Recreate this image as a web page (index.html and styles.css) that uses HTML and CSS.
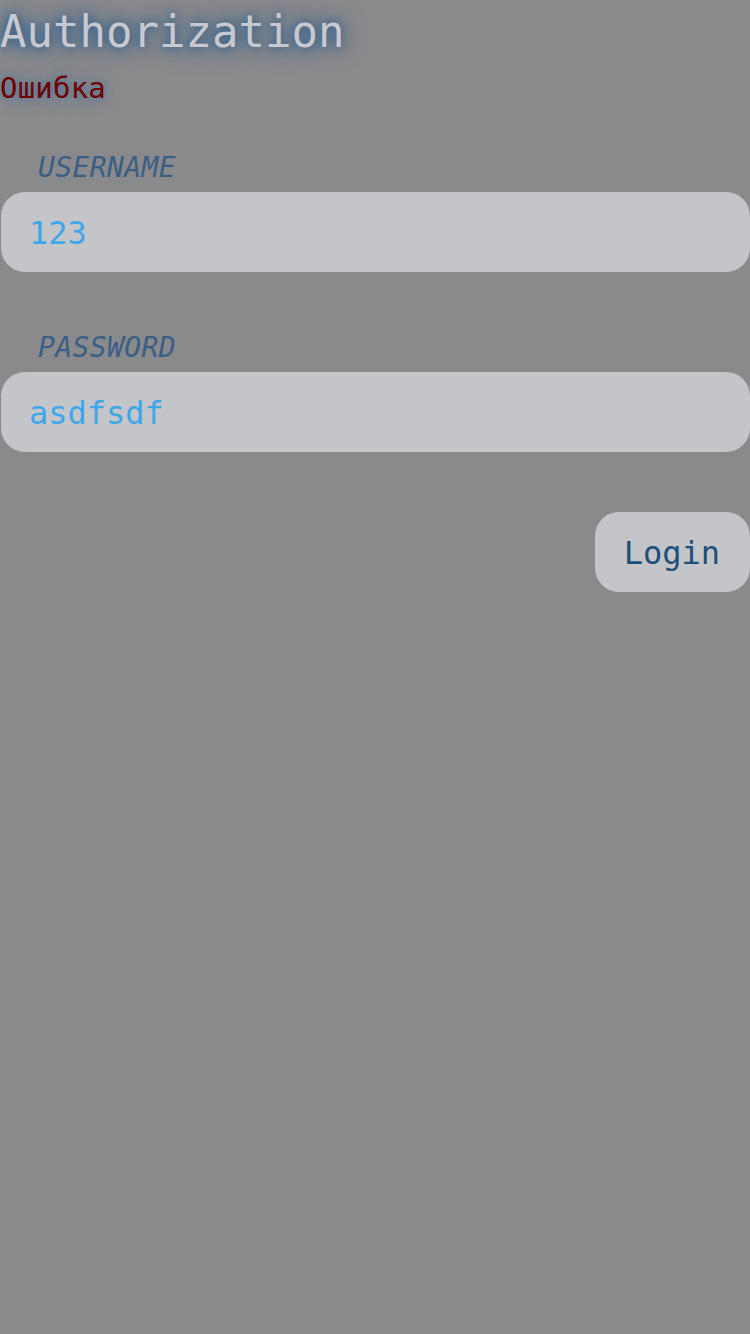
FILE: index.html
```html
<!DOCTYPE html>
<html lang="ru">
<head>
<meta charset="utf-8">
<title>Authorization</title>
<link rel="stylesheet" href="styles.css">
</head>
<body>
<div class="page">
  <h1 class="title">Authorization</h1>
  <div class="error">Ошибка</div>
  <form class="form">
    <label class="field">
      <span class="label">USERNAME</span>
      <input class="input" type="text" value="123">
    </label>
    <label class="field">
      <span class="label">PASSWORD</span>
      <input class="input" type="text" value="asdfsdf">
    </label>
    <div class="actions">
      <button class="button" type="button">Login</button>
    </div>
  </form>
</div>
</body>
</html>
```
FILE: styles.css
```css
html, body {
  margin: 0;
  padding: 0;
  background: #8a8a8c;
  min-height: 100%;
}
body {
  font-family: "DejaVu Sans Mono", "Liberation Mono", monospace;
}
.page {
  display: flex;
  flex-direction: column;
}
.title {
  margin: 0;
  padding-top: 6px;
  font-size: 44px;
  font-weight: normal;
  line-height: 51px;
  color: #c8c9d0;
  text-shadow: 0 0 8px #3a638c, 0 0 16px #3a638c, 0 0 24px #4a6d90;
}
.error {
  margin-top: 15px;
  font-size: 29px;
  line-height: 33px;
  letter-spacing: 0.2px;
  color: #6e0000;
  text-shadow: 0 0 8px #4f7396, 0 0 16px #5a7898;
}
.form {
  display: flex;
  flex-direction: column;
  margin-top: 46px;
  gap: 59px;
}
.field {
  display: flex;
  flex-direction: column;
  gap: 8px;
}
.label {
  padding-left: 38px;
  font-size: 28px;
  line-height: 33px;
  letter-spacing: 0.4px;
  font-style: italic;
  color: #3a5e85;
}
.input {
  box-sizing: border-box;
  margin: 0 0 0 1px;
  height: 80px;
  width: 749px;
  border: none;
  border-radius: 24px;
  background: #c4c5c9;
  padding: 1px 28px 0;
  font-family: inherit;
  font-size: 32px;
  color: #3ea6ea;
  outline: none;
}
.actions {
  display: flex;
  justify-content: flex-end;
  margin-top: 1px;
}
.button {
  height: 80px;
  padding: 1px 30px 0 29px;
  border: none;
  border-radius: 24px;
  background: #c4c5c9;
  font-family: inherit;
  font-size: 32px;
  color: #1d4f78;
}
```
